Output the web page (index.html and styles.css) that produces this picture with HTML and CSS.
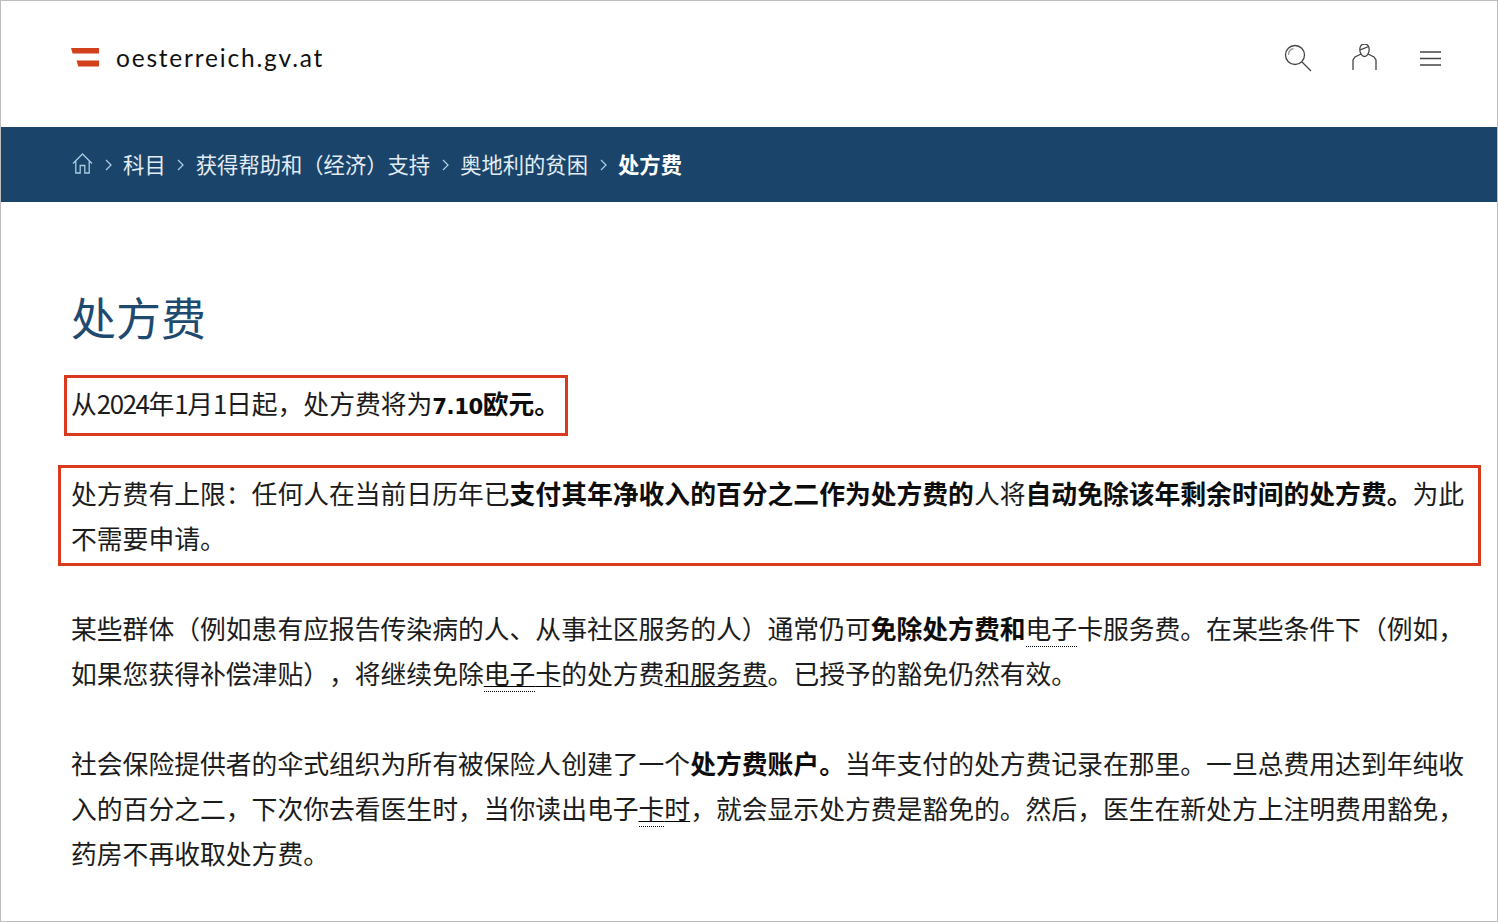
FILE: index.html
```html
<!DOCTYPE html>
<html lang="zh-CN">
<head>
<meta charset="utf-8">
<title>处方费</title>
<link rel="stylesheet" href="styles.css">
</head>
<body>
<div class="page">
  <header class="site-header">
    <a class="brand" href="#">
      <svg class="brand-flag" viewBox="0 0 29 19" width="29" height="19" aria-hidden="true"><path d="M0 0H28V5.500H1.600Z"/><path d="M5.500 12.500H28V18.500H7.300Z"/></svg>
      <span class="brand-name">oesterreich.gv.at</span>
    </a>
    <nav class="tools">
      <svg class="tool" viewBox="0 0 28 28" width="28" height="28" aria-hidden="true"><circle cx="11" cy="11" r="9.500"/><path d="M18 18 27 27"/><path class="thin" d="M4.500 11A6.500 6.500 0 0 1 9.500 4.500"/></svg>
      <svg class="tool" viewBox="0 1 25 28" width="25" height="28" aria-hidden="true"><path d="M12.500 1C9.300 1 7.800 3.800 7.800 6.500 7.800 10 10 13.500 12.500 13.500S17.200 10 17.200 6.500C17.200 3.800 15.700 1 12.500 1Z"/><path d="M8.200 6.800 16.700 3.500"/><path d="M9 11 3 14 1 17V27"/><path d="M16 11 22 14 24 17V27"/></svg>
      <svg class="tool tool-menu" viewBox="0 0 21 16" width="21" height="16" aria-hidden="true"><path d="M0 2H21M0 8.500H21M0 15H21"/></svg>
    </nav>
  </header>
  <nav class="crumbs">
    <svg class="home" viewBox="0 0 21 21" width="21" height="21" aria-hidden="true"><path d="M1 10.500 10.500 1 20 10.500M3.800 8V20H8.200V12.500H12.800V20H17.200V8"/></svg>
    <svg class="chev" viewBox="0 0 7 12" width="7" height="12" aria-hidden="true"><path d="M1 1 6 6 1 11"/></svg>
    <a href="#">科目</a>
    <svg class="chev" viewBox="0 0 7 12" width="7" height="12" aria-hidden="true"><path d="M1 1 6 6 1 11"/></svg>
    <a href="#">获得帮助和（经济）支持</a>
    <svg class="chev" viewBox="0 0 7 12" width="7" height="12" aria-hidden="true"><path d="M1 1 6 6 1 11"/></svg>
    <a href="#">奥地利的贫困</a>
    <svg class="chev" viewBox="0 0 7 12" width="7" height="12" aria-hidden="true"><path d="M1 1 6 6 1 11"/></svg>
    <strong>处方费</strong>
  </nav>
  <main class="content">
    <h1>处方费</h1>
    <p class="note note-short">从<span class="digits">2024</span>年<span class="digits">1</span>月<span class="digits">1</span>日起，处方费将为<b class="num">7.10</b><b>欧元。</b></p>
    <p class="note note-wide">处方费有上限：任何人在当前日历年已<b>支付其年净收入的百分之二作为处方费的</b>人将<b>自动免除该年剩余时间的处方费。</b>为此不需要申请。</p>
    <p class="para">某些群体（例如患有应报告传染病的人、从事社区服务的人）通常仍可<b>免除处方费和</b><span class="dotted">电子</span>卡服务费。在某些条件下（例如，如果您获得补偿津贴），将继续免除<a class="link" href="#"><span class="dotted">电子</span>卡</a>的处方费<a class="link" href="#">和服务费</a>。已授予的豁免仍然有效。</p>
    <p class="para">社会保险提供者的伞式组织为所有被保险人创建了一个<b>处方费账户。</b>当年支付的处方费记录在那里。一旦总费用达到年纯收入的百分之二，下次你去看医生时，当你读出电子<a class="link" href="#"><span class="dotted">卡</span>时</a>，就会显示处方费是豁免的。然后，医生在新处方上注明费用豁免，药房不再收取处方费。</p>
  </main>
</div>
</body>
</html>
```
FILE: styles.css
```css
* { box-sizing: border-box; }
html, body { margin: 0; padding: 0; background: #fff; }
body {
  font-family: "Noto Sans CJK SC", "Liberation Sans", sans-serif;
  color: #1c1c1c;
  text-spacing-trim: space-all;
}
.page {
  width: 1498px;
  height: 922px;
  overflow: hidden;
  border: 1px solid #bdbdbd;
}
.site-header {
  height: 126px;
  display: flex;
  align-items: flex-start;
  justify-content: space-between;
  padding: 43px 56px 0 70px;
}
.brand {
  display: flex;
  align-items: flex-start;
  gap: 16px;
  color: #111;
  text-decoration: none;
}
.brand-flag { fill: #d2401c; margin-top: 4px; }
.brand-name {
  font-family: Lato, "Liberation Sans", sans-serif;
  font-size: 24.500px;
  letter-spacing: 1.800px;
  line-height: 29px;
  margin-top: -1px;
}
.tools {
  display: flex;
  align-items: center;
  gap: 40px;
  height: 28px;
}
.tool {
  fill: none;
  stroke: #444;
  stroke-width: 1.300;
}
.tool-menu { margin-left: 3px; }
.tool .thin { stroke: #999; }
.crumbs {
  height: 75px;
  background: #1a4469;
  color: #dfe9f2;
  display: flex;
  align-items: center;
  gap: 11.550px;
  padding: 0 0 3px 71px;
  font-size: 21.300px;
}
.crumbs a { color: #e3ecf4; text-decoration: none; }
.crumbs strong { color: #fff; font-weight: 700; }
.home, .chev { fill: none; stroke: #a9cbe4; stroke-width: 1.300; flex: none; }
.chev { margin-top: 3px; }
.content { padding: 0 0 0 70px; font-size: 25.800px; line-height: 45px; }
h1 {
  margin: 0;
  padding-top: 82px;
  font-size: 45px;
  line-height: 66px;
  font-weight: 400;
  color: #1f4a70;
}
p { margin: 0; }
b { font-weight: 700; color: #0d0d0d; }
.digits { letter-spacing: -1.400px; }
.num { font-family: "DejaVu Sans", sans-serif; font-size: 21.200px; letter-spacing: -0.500px; }
.note { border: 3px solid #d9391c; }
.note-short {
  width: 504px;
  height: 61px;
  margin: 25px 0 0 -7px;
  padding: 2px 0 0 4px;
  white-space: nowrap;
}
.note-wide {
  width: 1423px;
  height: 101px;
  margin: 29px 0 0 -13px;
  padding: 2px 10px 0 10px;
}
.para { width: 1398px; margin-top: 39px; }
.para + .para { margin-top: 45px; }
.link { color: inherit; text-decoration: underline; text-decoration-color: #000; text-underline-offset: 2px; text-decoration-thickness: 1px; }
.dotted { border-bottom: 1px dotted #000; }
```
